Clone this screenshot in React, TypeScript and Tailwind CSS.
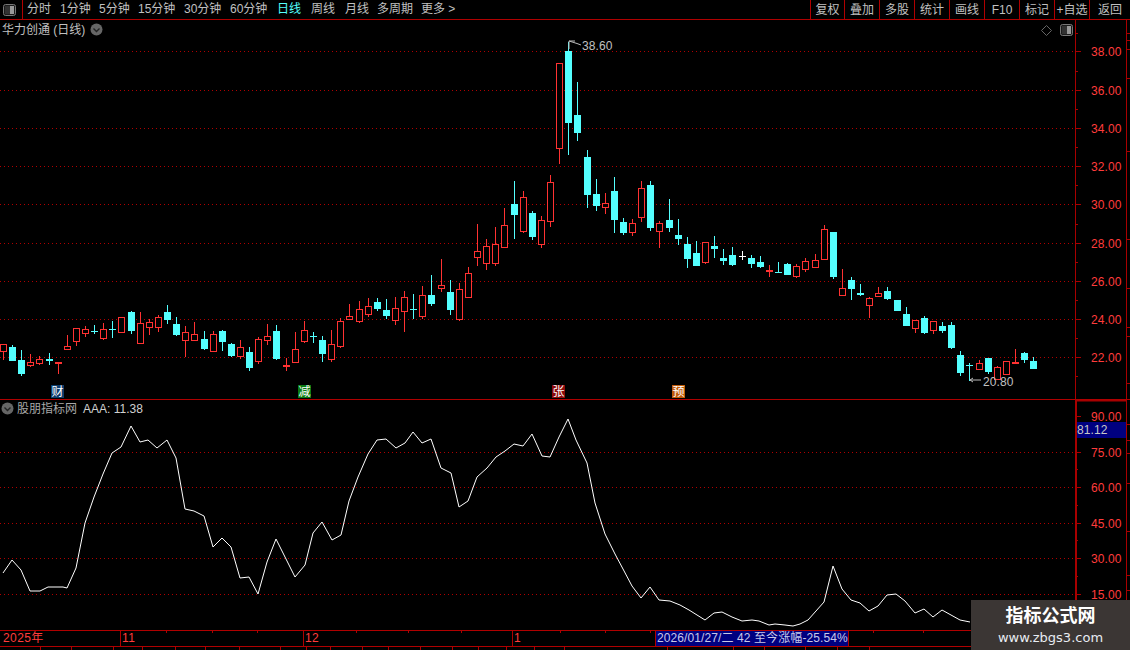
import React from "react";

type Candle = [number, "r" | "c" | "w", number, number, number, number];

// x, kind, wick top, body top, body bottom, wick bottom (screen px)
const candles: Candle[] = [
  [3, "r", 344, 344, 351, 360], [12, "c", 345, 347, 361, 361], [21, "c", 350, 360, 374, 376],
  [30, "r", 354, 362, 365, 367], [39, "r", 356, 359, 363, 365], [49, "c", 353, 359, 361, 365],
  [58, "r", 362, 362, 363, 374], [67, "r", 335, 346, 349, 350], [76, "r", 328, 328, 341, 346],
  [85, "r", 326, 329, 333, 337], [94, "c", 325, 331, 331, 334], [103, "r", 323, 329, 338, 340],
  [112, "c", 321, 329, 330, 338], [121, "r", 317, 317, 332, 332], [131, "c", 311, 312, 331, 334],
  [140, "r", 312, 323, 343, 343], [149, "r", 319, 322, 327, 335], [158, "r", 315, 317, 327, 332],
  [167, "c", 305, 312, 320, 324], [176, "c", 317, 324, 335, 336], [185, "r", 326, 332, 340, 357],
  [194, "r", 322, 334, 340, 341], [204, "c", 331, 339, 349, 350], [213, "r", 331, 334, 351, 351],
  [222, "c", 330, 331, 342, 351], [231, "c", 343, 344, 356, 357], [240, "r", 340, 347, 356, 359],
  [249, "c", 347, 352, 368, 371], [258, "r", 337, 339, 361, 364], [267, "r", 324, 336, 340, 345],
  [276, "c", 325, 331, 359, 360], [286, "r", 358, 365, 366, 371], [295, "r", 332, 349, 362, 362],
  [304, "r", 321, 330, 341, 343], [313, "c", 332, 336, 336, 343], [322, "c", 336, 340, 354, 362],
  [331, "r", 330, 344, 359, 362], [340, "r", 318, 321, 346, 348], [349, "r", 304, 316, 319, 319],
  [359, "r", 301, 309, 321, 323], [368, "r", 298, 306, 314, 317], [377, "c", 298, 302, 309, 311],
  [386, "c", 299, 310, 316, 319], [395, "r", 297, 308, 320, 325], [404, "r", 291, 297, 311, 332],
  [413, "c", 294, 309, 309, 319], [422, "r", 286, 295, 316, 319], [431, "c", 275, 295, 304, 306],
  [441, "r", 259, 285, 288, 292], [450, "c", 280, 292, 310, 315], [459, "r", 283, 289, 319, 321],
  [468, "r", 267, 273, 297, 297], [477, "r", 224, 251, 257, 266], [486, "r", 239, 246, 263, 270],
  [495, "r", 227, 244, 263, 266], [504, "r", 208, 225, 247, 247], [514, "c", 181, 204, 215, 239],
  [523, "r", 191, 197, 231, 233], [532, "c", 211, 213, 237, 240], [541, "r", 216, 220, 244, 248],
  [550, "r", 175, 182, 221, 227], [559, "r", 63, 63, 148, 164], [568, "c", 42, 51, 123, 155],
  [577, "c", 82, 115, 133, 141], [587, "c", 150, 157, 195, 208], [596, "c", 179, 194, 206, 211],
  [605, "r", 193, 203, 207, 214], [614, "c", 177, 191, 220, 233], [623, "c", 218, 222, 233, 235],
  [632, "r", 219, 223, 232, 236], [641, "r", 181, 188, 217, 222], [650, "c", 181, 185, 228, 231],
  [659, "r", 221, 223, 231, 248], [669, "c", 199, 220, 228, 232], [678, "c", 219, 235, 239, 245],
  [687, "c", 237, 244, 259, 268], [696, "c", 241, 253, 266, 266], [705, "r", 242, 242, 262, 264],
  [714, "c", 236, 246, 249, 258], [723, "c", 249, 258, 261, 265], [732, "c", 247, 255, 265, 266],
  [742, "w", 251, 256, 256, 260], [751, "c", 255, 258, 264, 268], [760, "c", 256, 262, 267, 268],
  [769, "r", 265, 270, 271, 277], [778, "c", 262, 272, 272, 273], [787, "c", 263, 264, 275, 275],
  [796, "r", 264, 266, 276, 278], [805, "r", 258, 261, 269, 272], [815, "r", 254, 260, 267, 267],
  [824, "r", 225, 229, 259, 259], [833, "c", 232, 232, 277, 279], [842, "r", 269, 288, 295, 295],
  [851, "c", 277, 280, 289, 300], [860, "c", 284, 293, 295, 296], [869, "r", 297, 298, 305, 318],
  [878, "r", 287, 293, 296, 296], [887, "c", 287, 291, 299, 300], [897, "c", 300, 300, 311, 311],
  [906, "c", 307, 314, 326, 326], [915, "r", 320, 320, 328, 333], [924, "c", 316, 318, 333, 334],
  [933, "r", 321, 321, 330, 334], [942, "c", 322, 326, 331, 333], [951, "c", 322, 325, 348, 349],
  [960, "c", 351, 355, 373, 376], [969, "c", 363, 365, 366, 381], [979, "r", 360, 363, 369, 369],
  [988, "c", 358, 358, 372, 374], [997, "r", 366, 367, 379, 379], [1006, "r", 361, 361, 374, 374],
  [1015, "r", 349, 362, 363, 364], [1024, "c", 352, 353, 360, 363], [1033, "c", 357, 361, 369, 369],
];

const curve =
  "3,573 12,560 21,570 30,591 40,591 48,587 63,587 67,588 76,568 85,523 94,497 103,474 112,453 121,447 131,426 140,442 148,440 157,448 167,440 176,458 185,509 194,511 204,516 213,547 222,538 231,547 240,578 249,577 258,594 267,562 276,539 295,577 300,571 305,565 313,533 322,522 332,540 341,535 349,501 358,477 368,454 377,440 386,439 396,448 405,443 413,432 422,443 431,439 441,468 451,473 459,507 468,501 477,477 487,468 496,457 505,451 514,444 523,446 532,434 542,456 550,457 559,437 568,419 576,440 587,463 595,503 605,534 615,554 623,569 632,586 641,598 650,587 659,600 670,601 680,605 689,610 705,620 714,613 722,612 732,617 742,621 752,620 759,621 769,625 775,624 785,625 793,626 800,624 808,620 824,602 833,566 842,589 851,600 860,603 869,611 878,606 887,595 896,594 905,601 915,613 924,609 933,617 942,610 951,615 960,620 970,622";

const RED_LINE = "#a80000";
const RED_TEXT = "#ff3c3c";

const leftTabs = [
  { label: "分时", w: "w-[33px]" },
  { label: "1分钟", w: "w-[39px]" },
  { label: "5分钟", w: "w-[39px]" },
  { label: "15分钟", w: "w-[46px]" },
  { label: "30分钟", w: "w-[46px]" },
  { label: "60分钟", w: "w-[47px]" },
  { label: "日线", w: "w-[34px]", active: true },
  { label: "周线", w: "w-[34px]" },
  { label: "月线", w: "w-[32px]" },
  { label: "多周期", w: "w-[44px]" },
  { label: "更多 >", w: "w-[40px]" },
];

const rightTabs = [
  { label: "复权", w: "w-[34px]" },
  { label: "叠加", w: "w-[35px]" },
  { label: "多股", w: "w-[35px]" },
  { label: "统计", w: "w-[35px]" },
  { label: "画线", w: "w-[35px]" },
  { label: "F10", w: "w-[35px]" },
  { label: "标记", w: "w-[35px]" },
  { label: "+自选", w: "w-[35px]" },
  { label: "返回", w: "w-[41px]" },
];

const statusCells = [41, 31, 42, 29, 33, 30, 34, 41, 26, 24, 32, 26, 32, 32, 26, 28, 28, 30, 103, 66, 31, 41, 32, 32];

const PanelIcon = () => (
  <svg width="13" height="12" viewBox="0 0 13 12">
    <rect x="0.5" y="0.5" width="12" height="11" rx="2" fill="#1c1c1c" stroke="#777" />
    <rect x="7" y="2" width="4" height="8" fill="#999" />
    <rect x="2" y="2" width="5" height="8" fill="#333" />
  </svg>
);

const RoundChevron = () => (
  <svg width="13" height="13" viewBox="0 0 13 13">
    <circle cx="6.5" cy="6.5" r="6" fill="#666" />
    <path d="M3.5 5.5 L6.5 8.5 L9.5 5.5" fill="none" stroke="#222" strokeWidth="1.4" />
  </svg>
);

const GridLine = ({ y }: { y: number }) => (
  <line x1="0" x2="1075" y1={y + 0.5} y2={y + 0.5} stroke="#b00000" strokeDasharray="1 3" />
);

const CandleMark = ({ c }: { c: Candle }) => {
  const [x, kind, wt, bt, bb, wb] = c;
  const color = kind === "r" ? "#ff3232" : kind === "c" ? "#54ffff" : "#ffffff";
  return (
    <g shapeRendering="crispEdges">
      <line x1={x + 0.5} x2={x + 0.5} y1={wt} y2={wb} stroke={color} />
      {kind === "r" ? (
        <rect x={x - 2.5} y={bt + 0.5} width={6} height={Math.max(bb - bt, 1)} fill="#000" stroke={color} />
      ) : (
        <rect x={x - 3} y={bt} width={7} height={Math.max(bb - bt, 1)} fill={color} />
      )}
    </g>
  );
};

const Tag = ({ x, label, bg }: { x: number; label: string; bg: string }) => (
  <g>
    <rect x={x} y={385} width={13} height={13} fill={bg} />
    <text x={x + 0.5} y={396} fontSize="12" fill="#fff">
      {label}
    </text>
  </g>
);

const Axis = ({
  top,
  height,
  labels,
  minors,
  sideTicks,
  children,
}: {
  top: number;
  height: number;
  labels: [string, number][];
  minors: number[];
  sideTicks: number[];
  children?: React.ReactNode;
}) => (
  <svg className="block flex-none" width="55" height={height} viewBox={`1075 ${top} 55 ${height}`}>
    <g shapeRendering="crispEdges" stroke={RED_LINE}>
      <line x1="1075.5" x2="1075.5" y1={top} y2={top + height} />
      <line x1="1126.5" x2="1126.5" y1={top} y2={top + height} />
      {labels.map(([, y]) => (
        <line key={y} x1="1076" x2="1081" y1={y + 0.5} y2={y + 0.5} />
      ))}
      {minors.map((y) => (
        <line key={y} x1="1076" x2="1078" y1={y + 0.5} y2={y + 0.5} />
      ))}
      {sideTicks.map((y) => (
        <line key={y} x1="1127" x2="1130" y1={y + 0.5} y2={y + 0.5} />
      ))}
    </g>
    {labels.map(([t, y]) => (
      <text key={t} x="1091" y={y + 5} fontSize="12" letterSpacing="0.1" fill={RED_TEXT}>
        {t}
      </text>
    ))}
    {children}
  </svg>
);

const priceLabels: [string, number][] = [
  ["38.00", 51], ["36.00", 90], ["34.00", 128], ["32.00", 166],
  ["30.00", 204], ["28.00", 243], ["26.00", 281], ["24.00", 319], ["22.00", 357],
];
const priceGrid = [51, 90, 128, 166, 204, 243, 281, 319, 357];
const indicatorLabels: [string, number][] = [
  ["90.00", 416], ["75.00", 452], ["60.00", 487], ["45.00", 523], ["30.00", 558], ["15.00", 594],
];
const indicatorGrid = [452, 487, 523, 558, 594];

export default function App() {
  return (
    <div className="relative flex h-[650px] w-[1130px] flex-col overflow-hidden bg-black font-['Liberation_Sans','Noto_Sans_CJK_SC',sans-serif] text-[12px] text-[#c0c0c0]">
      {/* top toolbar */}
      <div className="flex h-5 flex-none items-stretch border-b border-[#b00000]">
        <div className="flex w-[23px] flex-none items-center justify-center border-r border-[#b00000] pr-1">
          <PanelIcon />
        </div>
        <div className="flex flex-1 items-center pl-1 leading-[19px]">
          {leftTabs.map((t) => (
            <span key={t.label} className={`flex-none whitespace-pre ${t.w} ${t.active ? "text-[#54ffff]" : ""}`}>
              {t.label}
            </span>
          ))}
        </div>
        <div className="flex flex-none">
          {rightTabs.map((t) => (
            <span
              key={t.label}
              className={`flex flex-none items-center justify-center whitespace-nowrap border-l border-[#b00000] ${t.w}`}
            >
              {t.label}
            </span>
          ))}
        </div>
      </div>

      {/* price pane */}
      <div className="relative flex h-[380px] flex-none border-b border-[#b00000]">
        <svg className="block flex-none" width="1075" height="379" viewBox="0 20 1075 379">
          {priceGrid.map((y) => (
            <GridLine key={y} y={y} />
          ))}
          {candles.map((c) => (
            <CandleMark key={c[0]} c={c} />
          ))}
          <path d="M569 49V41H575M569 41L577 43.5L581 45" fill="none" stroke="#bbb" />
          <text x="582" y="50" fontSize="12" letterSpacing="0.1" fill="#c0c0c0">
            38.60
          </text>
          <path d="M970 380H981M970 380L973 378M970 380L973 382" fill="none" stroke="#bbb" />
          <text x="983" y="386" fontSize="12" letterSpacing="0.1" fill="#c0c0c0">
            20.80
          </text>
          <Tag x={51} label="财" bg="#0c3c6c" />
          <Tag x={298} label="减" bg="#0a7a12" />
          <Tag x={552} label="张" bg="#8c0a0a" />
          <Tag x={672} label="预" bg="#c05a08" />
        </svg>
        <Axis
          top={20}
          height={379}
          labels={priceLabels}
          minors={[33, 71, 109, 147, 185, 224, 262, 300, 338, 376]}
          sideTicks={[33, 40, 49, 78, 151, 239, 288, 327, 336, 383]}
        />
        <div className="absolute left-[2px] top-[1px] flex h-[17px] items-center gap-[5px]">
          <span>华力创通 (日线)</span>
          <RoundChevron />
        </div>
        <div className="absolute left-[1041px] top-[4px] flex items-center gap-[8px]">
          <svg width="11" height="11" viewBox="0 0 11 11">
            <path d="M5.5 0.5L10.5 5.5L5.5 10.5L0.5 5.5Z" fill="none" stroke="#666" />
          </svg>
          <PanelIcon />
        </div>
      </div>

      {/* indicator pane */}
      <div className="relative flex h-[230px] flex-none">
        <svg className="block flex-none" width="1075" height="230" viewBox="0 400 1075 230">
          {indicatorGrid.map((y) => (
            <GridLine key={y} y={y} />
          ))}
          <polyline points={curve} fill="none" stroke="#ffffff" strokeLinejoin="bevel" />
        </svg>
        <Axis
          top={400}
          height={230}
          labels={indicatorLabels}
          minors={[469, 505, 540, 576, 612]}
          sideTicks={[424, 440, 453, 483, 531, 575, 590]}
        >
          <line x1="1075" x2="1127" y1="400.5" y2="400.5" stroke={RED_LINE} strokeWidth="2" />
          <line x1="1076" x2="1076" y1="400" y2="630" stroke={RED_LINE} strokeWidth="2" />
          <rect x="1077" y="422" width="49" height="16" fill="#000080" />
          <text x="1077" y="434" fontSize="12" letterSpacing="0.1" fill="#c8c8c8">
            81.12
          </text>
        </Axis>
        <div className="absolute left-px top-0 flex h-[17px] items-center gap-[3px]">
          <RoundChevron />
          <span className="text-[#a8a8a8]">股朋指标网</span>
          <span className="ml-[3px] text-[#d0d0d0]">AAA: 11.38</span>
        </div>
      </div>

      {/* time axis */}
      <div className="relative flex h-[17px] flex-none whitespace-nowrap border-y border-[#b00000] leading-[15px] tracking-[0.4px] text-[#ff3c3c]">
        <div className="w-[121px] flex-none border-r border-[#b00000] pl-[3px]">2025年</div>
        <div className="w-[183px] flex-none border-r border-[#b00000] pl-px">11</div>
        <div className="w-[209px] flex-none border-r border-[#b00000] pl-px">12</div>
        <div className="w-[142px] flex-none pl-px">1</div>
        <div className="w-[194px] flex-none border-x border-[#b00000] bg-[#000080] pl-px tracking-[0.1px] text-[#c8c8e8]">
          2026/01/27/二 42 至今涨幅-25.54%
        </div>
        <svg className="absolute left-0 top-0" width="1130" height="3" viewBox="0 0 1130 3">
          {[166, 212, 257, 356, 408, 461, 560, 605, 650, 873, 923].map((x) => (
            <line key={x} x1={x + 0.5} x2={x + 0.5} y1="0" y2="2" stroke="#b00000" />
          ))}
        </svg>
      </div>

      {/* clipped status bar */}
      <div className="flex h-[3px] flex-none overflow-hidden">
        {statusCells.map((w, i) => (
          <div key={i} className="h-full flex-none border-r border-[#b00000]" style={{ width: w }} />
        ))}
      </div>

      {/* watermark */}
      <div className="absolute bottom-0 right-0 flex h-[50px] w-[159px] flex-col items-center bg-[#3b3634] pt-[4px]">
        <span className="text-[18px] font-bold leading-[24px] text-white">指标公式网</span>
        <span className="font-['DejaVu_Sans',sans-serif] text-[13px] leading-[19px] text-[#e8ecf2]">www.zbgs3.com</span>
      </div>
    </div>
  );
}
